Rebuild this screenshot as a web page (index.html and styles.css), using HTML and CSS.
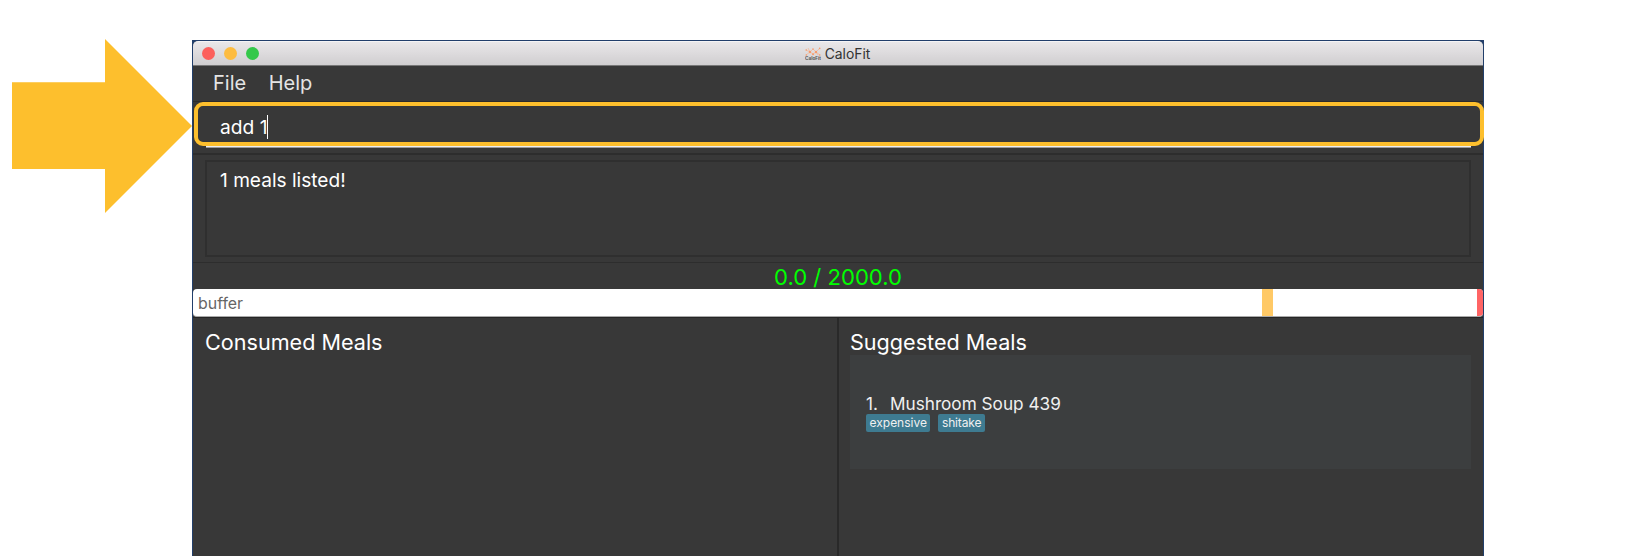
FILE: index.html
```html
<!DOCTYPE html>
<html lang="en">
<head>
<meta charset="utf-8">
<title>CaloFit</title>
<link rel="stylesheet" href="styles.css">
</head>
<body>
<main class="stage">
  <svg class="arrow" width="180" height="174" viewBox="0 0 180 174"><path d="M0 43.3H93V0L180 87 93 174V130H0Z" fill="#fdbf2d"/></svg>
  <section class="desktop">
    <div class="window">
      <header class="titlebar">
        <div class="lights"><i class="light red"></i><i class="light yellow"></i><i class="light green"></i></div>
        <div class="title">
          <svg class="logo" width="16" height="14" viewBox="0 0 16 14"><g fill="none" stroke="#f6b592" stroke-width=".7"><path d="M1 3L5 5 8 2 11 5 15 1M1 8L5 5 8 7 11 5 15 8M3 1L5 5M11 5L13 8"/></g><g fill="#f79a6b"><circle cx="1.2" cy="3" r=".8"/><circle cx="5" cy="5" r="1.2"/><circle cx="8" cy="2" r=".8"/><circle cx="11" cy="5" r="1.2"/><circle cx="14.7" cy="1.4" r=".8"/><circle cx="1.3" cy="8" r=".8"/><circle cx="8" cy="7.3" r="1"/><circle cx="14.7" cy="8" r=".8"/></g><text x="0" y="12.7" textLength="16" lengthAdjust="spacingAndGlyphs" class="logo-text">CaloFit</text></svg>
          <span class="title-text">CaloFit</span>
        </div>
      </header>
      <nav class="menu"><span class="file">File</span><span class="help">Help</span></nav>
      <div class="command"><span class="command-text">add 1</span><i class="caret"></i></div>
      <div class="underline"></div>
      <div class="result"><div class="result-box"><span class="result-text">1 meals listed!</span></div></div>
      <div class="calories"><span class="calories-text">0.0 / 2000.0</span></div>
      <div class="bar"><span class="bar-text">buffer</span><i class="mark warn"></i><i class="mark limit"></i></div>
      <div class="panes">
        <section class="pane left"><h2 class="heading consumed">Consumed Meals</h2></section>
        <section class="pane right">
          <h2 class="heading suggested">Suggested Meals</h2>
          <article class="card">
            <div class="meal"><span class="index">1.</span><span class="name">Mushroom Soup 439</span></div>
            <div class="tags"><span class="tag expensive">expensive</span><span class="tag shitake">shitake</span></div>
          </article>
        </section>
      </div>
    </div>
  </section>
</main>
</body>
</html>
```
FILE: styles.css
```css
* { box-sizing: border-box; }
body { margin: 0; background: #fff; font-family: Inter, "Liberation Sans", sans-serif; color: #fff; }
.stage { display: flex; align-items: flex-start; width: 1644px; height: 556px; padding-left: 12px; overflow: hidden; white-space: nowrap; }
.arrow { flex: none; margin-top: 39px; }
.desktop { width: 1292px; height: 516px; margin-top: 40px; padding: 1px 1px 0; background: #223f6b; }
.window { display: flex; flex-direction: column; height: 515px; background: #383838; border-radius: 5px 5px 0 0; }
.titlebar { display: grid; grid-template-columns: 1fr auto 1fr; align-items: center; height: 25px; padding: 0 9px; background: linear-gradient(#e9e7e9, #d0ced0); border-top: 1px solid #f5f4f5; border-bottom: 1px solid #777; border-radius: 5px 5px 0 0; }
.lights { display: flex; gap: 9px; }
.light { width: 13px; height: 13px; border-radius: 50%; }
.red { background: #fc605c; }
.yellow { background: #fdbc40; }
.green { background: #34c84a; }
.title { display: flex; align-items: center; gap: 4px; color: #333; font-size: 13.9px; line-height: 20px; margin-right: 1px; }
.logo-text { font-size: 4.5px; font-weight: 700; fill: #555; }
.menu { display: flex; gap: 22.5px; height: 36px; padding: 3px 0 0 20px; line-height: 28px; font-size: 20px; color: #e4e4e4; border-bottom: 1px solid #2b2b2b; }
.command { display: flex; align-items: center; height: 44px; margin-left: 1px; margin-right: -1px; padding: 6px 0 0 22px; border: 4px solid #fdbf2d; border-radius: 9px; font-size: 19.2px; }
.caret { width: 1px; height: 24px; background: #fff; }
.underline { height: 2px; margin: 0 12px 0 13px; background: linear-gradient(#eee 50%, #9b9b9b 50%); }
.result { height: 110px; margin-top: 5px; padding: 5px 12px 5px 12px; border: solid #2d2d2d; border-width: 2px 0 1px; }
.result-box { height: 97px; padding: 6px 13px; border: 2px solid #2f2f2f; font-size: 19.1px; line-height: 24px; }
.calories { height: 26px; text-align: center; font-size: 22.1px; line-height: 28px; color: #0f0; }
.bar { display: grid; grid-template-columns: 1069px 11px 1fr 6px; height: 28px; background: #fff; border-radius: 4px; overflow: hidden; border-bottom: 1px solid #aaa; }
.bar-text { padding-left: 5px; line-height: 29px; font-size: 15.9px; color: #666; }
.warn { background: #ffc966; }
.limit { grid-column: 4; background: #ff6464; }
.panes { display: grid; grid-template-columns: 644px 1fr; flex: 1; border-top: 1px solid #252525; }
.left { padding: 11px 12px; }
.right { padding: 11px 12px 0 11px; border-left: 2px solid #292929; }
.heading { margin: 0; height: 26px; font-size: 21.6px; line-height: 26px; font-weight: 400; }
.card { height: 114px; padding: 37px 16px 0; background: #3c3e3f; color: #f0f0f0; }
.meal { display: flex; gap: 12px; height: 22px; font-size: 17.2px; line-height: 23px; }
.tags { display: flex; gap: 8px; }
.tag { height: 18px; padding: 0 3.5px; border-radius: 2px; background: #3e7b91; font-size: 12px; line-height: 18px; }
.shitake { letter-spacing: -.15px; }
```
